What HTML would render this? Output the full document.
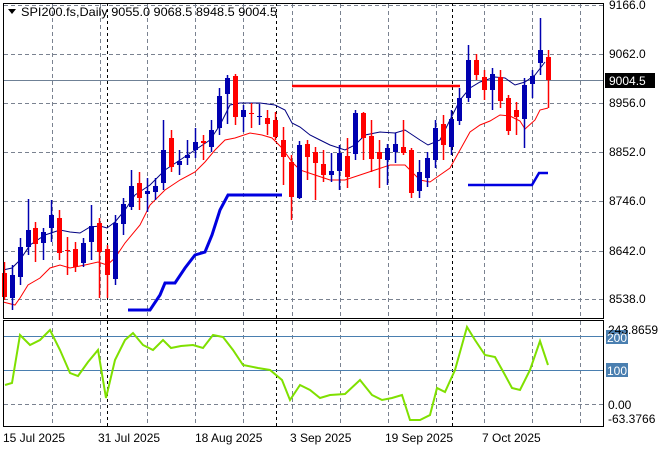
<!DOCTYPE html>
<html><head><meta charset="utf-8"><style>
html,body{margin:0;padding:0;background:#fff;width:660px;height:450px;overflow:hidden}
svg{display:block}
text{font-family:"Liberation Sans",sans-serif;font-size:12px;fill:#000}
</style></head><body>
<svg id="s" width="660" height="450" xmlns="http://www.w3.org/2000/svg">
<rect x="0" y="0" width="660" height="450" fill="#fff"/>
<g id="grid" stroke="#7a8290" stroke-dasharray="4,3" stroke-width="1"></g>
<g stroke="#000" stroke-dasharray="3,3" stroke-width="1">
<line x1="107.5" y1="3" x2="107.5" y2="426"/><line x1="276.5" y1="3" x2="276.5" y2="426"/><line x1="452.5" y1="3" x2="452.5" y2="426"/>
</g>
<line x1="3" y1="80.5" x2="604" y2="80.5" stroke="#6f8196" stroke-width="1"/>
<line x1="3" y1="336.5" x2="604" y2="336.5" stroke="#4a7fb0" stroke-width="1"/>
<line x1="3" y1="370.5" x2="604" y2="370.5" stroke="#4a7fb0" stroke-width="1"/>
<polyline fill="none" stroke="#0000e0" stroke-width="3" points="128,310 150,310 160,295 165,283 175,283 185,268 195,255 205,252 212,235 220,210 228,195 282,195"/>
<polyline fill="none" stroke="#0000e0" stroke-width="2.5" points="468,185 532,185 539,173 548,173"/>
<line x1="292" y1="86" x2="460" y2="86" stroke="#f00" stroke-width="2.5"/>
<polyline fill="none" stroke="#000080" stroke-width="1" points="3,270 12,268 20,260 30,245 45,235 60,230 70,232 80,233 90,227 100,226 107,228 115,222 125,210 135,195 150,185 165,170 180,160 195,150 210,140 220,125 230,105 240,103 260,103 275,105 285,110 292,123 300,127 310,135 320,140 330,145 345,150 355,145 365,135 380,132 395,133 405,130 420,140 428,145 440,140 450,120 460,100 470,88 480,82 495,77 505,78 515,85 525,82 535,75 545,62"/>
<polyline fill="none" stroke="#f00" stroke-width="1" points="3,302 15,305 20,298 28,285 40,278 50,268 60,265 70,268 85,265 98,262 107,265 115,258 125,243 140,225 150,205 165,190 180,180 195,172 205,162 215,150 225,140 235,138 250,133 262,135 272,138 282,148 292,162 300,170 315,175 330,180 345,180 360,175 375,170 390,165 405,165 420,180 430,182 440,175 450,168 460,150 470,132 480,125 490,121 500,115 510,116 520,121 525,129 535,120 540,110 548,108"/>
<g id="c"></g>
<polyline fill="none" stroke="#7fe000" stroke-width="2" points="5,385 12,383 20,335 30,345 40,340 50,330 60,350 70,373 78,376 88,362 98,350 106,398 115,360 125,340 133,333 143,345 153,350 163,340 171,348 181,346 193,345 203,348 213,335 223,337 233,350 243,365 258,368 270,370 282,380 290,400 300,385 310,390 320,398 330,395 345,394 360,380 372,395 382,400 392,398 402,395 410,420 420,420 430,415 437,388 445,392 455,370 467,327 475,340 485,355 495,357 505,375 512,388 520,390 530,370 540,341 548,365"/>
<rect x="3.5" y="3.5" width="600" height="315" fill="none" stroke="#000"/>
<rect x="3.5" y="320.5" width="600" height="106" fill="none" stroke="#000"/>
<path d="M8 9 L16 9 L12 14 Z" fill="#000"/>
<text x="21" y="16" textLength="256" lengthAdjust="spacingAndGlyphs">SPI200.fs,Daily  9055.0 9068.5 8948.5 9004.5</text>
<g id="lab"></g>
<rect x="605" y="73" width="50" height="15" fill="#000"/>
<text x="609" y="85" style="fill:#fff">9004.5</text>
<rect x="606" y="330" width="22" height="14" fill="#4a7fb0"/>
<rect x="606" y="363" width="22" height="14" fill="#4a7fb0"/>
<text x="608" y="334">243.8659</text>
<text x="607" y="342" style="fill:#fff">200</text>
<text x="607" y="375" style="fill:#fff">100</text>
<text x="608" y="409">0.00</text>
<text x="608" y="423">-63.3766</text>
<text x="3" y="442">15 Jul 2025</text>
<text x="98" y="442">31 Jul 2025</text>
<text x="195" y="442">18 Aug 2025</text>
<text x="290" y="442">3 Sep 2025</text>
<text x="385" y="442">19 Sep 2025</text>
<text x="482" y="442">7 Oct 2025</text>
</svg>
<script>
var ns="http://www.w3.org/2000/svg";
function el(p,t,a){var e=document.createElementNS(ns,t);for(var k in a)e.setAttribute(k,a[k]);p.appendChild(e);return e;}
var g=document.getElementById('grid');
[52,100,147,195,243,292,340,388,436,484,532,580].forEach(function(x){el(g,'line',{x1:x+.5,y1:4,x2:x+.5,y2:318});el(g,'line',{x1:x+.5,y1:321,x2:x+.5,y2:426});});
[5,54,103,152,201,251,299].forEach(function(y){el(g,'line',{x1:4,y1:y+.5,x2:603,y2:y+.5});});
el(g,'line',{x1:4,y1:404.5,x2:603,y2:404.5});
var L=document.getElementById('lab');
[[9,'9166.0'],[58,'9062.0'],[107,'8956.0'],[156,'8852.0'],[205,'8746.0'],[255,'8642.0'],[303,'8538.0']].forEach(function(a){el(L,'text',{x:609,y:a[0]}).textContent=a[1];});
var d=[[4,273,297,'r',262,300],[12,275,298,'b',265,310],[20,247,277,'b',238,285],[28,230,247,'b',199,255],[35,228,244,'r',222,262],[43,232,243,'b',228,260],[51,215,228,'b',200,242],[59,218,253,'r',210,260],[67,250,251,'r',237,275],[75,249,267,'r',242,272],[83,243,263,'b',238,267],[91,226,242,'b',205,260],[99,223,252,'r',218,298],[107,249,275,'r',245,298],[115,223,279,'b',215,285],[123,204,224,'b',198,235],[131,186,207,'b',170,210],[139,183,198,'r',172,210],[147,191,194,'b',178,212],[155,186,192,'b',178,200],[163,150,183,'b',120,190],[171,138,167,'r',130,172],[179,161,165,'b',150,175],[187,155,158,'b',140,165],[195,142,150,'b',128,158],[203,141,143,'r',135,160],[211,130,147,'b',120,152],[219,96,128,'b',88,135],[227,78,94,'b',75,124],[235,76,117,'r',74,125],[243,110,117,'b',105,132],[251,113,114,'r',103,128],[259,116,117,'b',104,125],[267,118,124,'r',110,135],[275,120,137,'r',112,140],[283,140,157,'r',127,185],[291,162,197,'r',155,220],[299,145,198,'b',141,199],[307,144,157,'r',140,180],[315,152,163,'r',147,200],[323,164,175,'r',150,182],[331,171,175,'b',153,182],[339,153,171,'b',145,190],[347,156,177,'r',138,188],[355,113,154,'b',110,160],[363,113,138,'r',112,160],[371,136,159,'r',120,172],[379,152,159,'r',140,188],[387,148,160,'b',144,185],[395,144,152,'b',133,163],[403,147,153,'r',120,155],[411,150,193,'r',148,198],[419,172,191,'b',160,198],[427,158,178,'b',152,187],[435,128,160,'b',120,168],[443,124,145,'r',115,160],[451,119,147,'b',110,155],[459,98,121,'b',88,125],[468,60,98,'b',45,102],[476,60,75,'r',54,80],[484,77,90,'r',70,100],[492,74,90,'b',68,110],[500,77,101,'r',70,108],[508,98,131,'r',95,135],[516,110,117,'r',102,135],[524,85,119,'b',78,148],[532,76,84,'b',70,98],[540,50,63,'b',18,75],[548,57,80,'r',50,108]];
var c=document.getElementById('c');
d.forEach(function(a){var col=a[3]=='b'?'#0000b0':'#f00';
el(c,'line',{x1:a[0]+.5,y1:a[4],x2:a[0]+.5,y2:a[5],stroke:col,'stroke-width':1.5});
el(c,'rect',{x:a[0]-2,y:a[1],width:5,height:Math.max(1,a[2]-a[1]),fill:col});});
</script>
</body></html>
